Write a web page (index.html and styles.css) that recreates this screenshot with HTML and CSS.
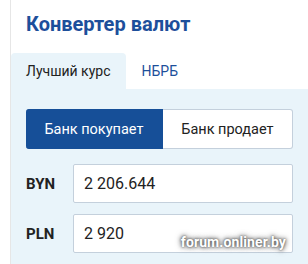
FILE: index.html
```html
<!DOCTYPE html>
<html lang="ru">
<head>
<meta charset="utf-8">
<link rel="stylesheet" href="styles.css">
</head>
<body>
<div class="widget">
  <h2 class="title">Конвертер валют</h2>
  <div class="tabs">
    <div class="tab tab-active">Лучший курс</div>
    <div class="tab">НБРБ</div>
  </div>
  <div class="panel">
    <div class="toggle">
      <div class="toggle-btn toggle-on">Банк покупает</div>
      <div class="toggle-btn">Банк продает</div>
    </div>
    <div class="rows">
      <div class="row">
        <div class="cur">BYN</div>
        <div class="field">2 206.644</div>
      </div>
      <div class="row">
        <div class="cur">PLN</div>
        <div class="field">2 920</div>
      </div>
    </div>
  </div>
  <div class="watermark">forum.onliner.by</div>
</div>
</body>
</html>
```
FILE: styles.css
```css
html, body {
  margin: 0;
  padding: 0;
  background: #fff;
  height: 100%;
  overflow: hidden;
}
body {
  font-family: Roboto, "Liberation Sans", sans-serif;
  color: #222;
}
.widget {
  position: relative;
  margin-left: 10px;
  border-left: 1px solid #e6e6e6;
  height: 100%;
  display: flex;
  flex-direction: column;
}
.title {
  margin: 12px 0 0 15px;
  font-size: 20px;
  line-height: 24px;
  font-weight: 700;
  color: #1d4f9b;
}
.tabs {
  display: flex;
  margin-top: 17px;
  height: 36px;
}
.tab {
  padding: 0 15px 0 16px;
  font-size: 14px;
  line-height: 37px;
  color: #1d4f9b;
}
.tab-active {
  background: #e9f4fa;
  color: #222;
  border-radius: 4px 4px 0 0;
  padding: 0 15px 0 15px;
}
.panel {
  flex: 1;
  background: #e9f4fa;
  padding: 20px 15px 0 15px;
}
.toggle {
  display: flex;
  height: 40px;
}
.toggle-btn {
  flex: 1 1 auto;
  display: flex;
  align-items: center;
  justify-content: center;
  font-size: 14.5px;
  background: #fff;
  border: 1px solid #c4d0dc;
  border-left: none;
  border-radius: 0 3px 3px 0;
  color: #222;
}
.toggle-on {
  background: #164f98;
  border-color: #164f98;
  color: #fff;
  border-radius: 3px 0 0 3px;
}
.rows {
  margin-top: 15px;
  display: flex;
  flex-direction: column;
  gap: 11px;
}
.row {
  display: flex;
  align-items: center;
}
.cur {
  width: 47px;
  font-size: 15px;
  font-weight: 700;
  color: #222;
}
.field {
  flex: 1;
  height: 37px;
  line-height: 37px;
  padding-left: 10px;
  background: #fff;
  border: 1px solid #c4d0dc;
  border-radius: 2px;
  font-size: 16px;
  color: #222;
}
.watermark {
  position: absolute;
  right: 22px;
  bottom: 14px;
  font-size: 14px;
  font-weight: 700;
  color: #fff;
  letter-spacing: 0.1px;
  text-shadow: 0 0 2px #555, 0 0 4px #666, 0 0 6px #777;
}
```
